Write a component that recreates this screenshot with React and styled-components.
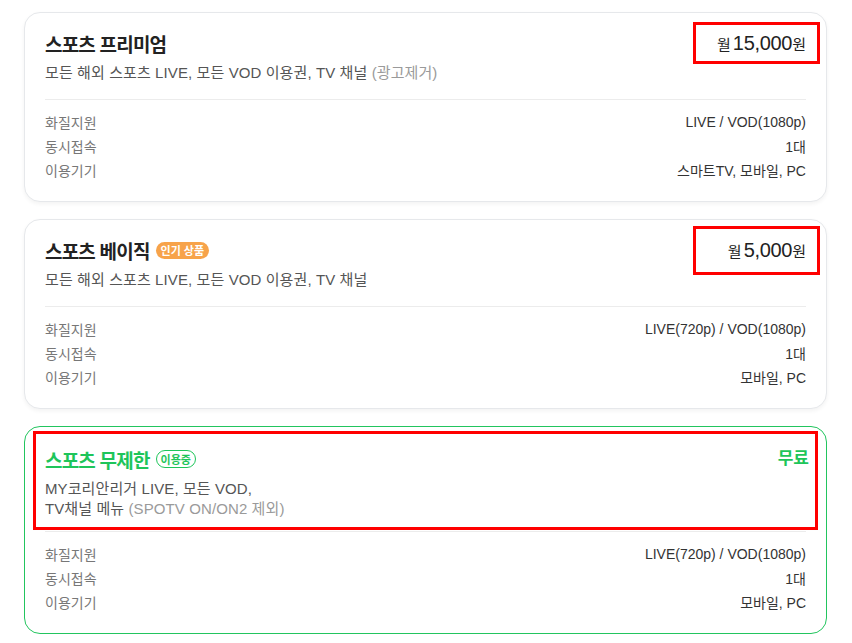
import React from 'react'
import styled, { createGlobalStyle, css } from 'styled-components'

const GlobalStyle = createGlobalStyle`
	body {
		margin: 0;
		background: #fff;
		font-family: 'Liberation Sans', 'Noto Sans CJK KR', sans-serif;
	}
`

const Page = styled.div`
	padding: 12px 25px 8px 24px;
	display: flex;
	flex-direction: column;
	gap: 17px;
`

const Card = styled.div`
	border: 1px solid ${(p) => (p.$active ? '#22c55e' : '#e6e8eb')};
	border-radius: 16px;
	padding: ${(p) => (p.$active ? '4px' : '17px')} 20px 19px 20px;
	box-shadow: ${(p) => (p.$active ? 'none' : '0 2px 4px rgba(0, 0, 0, 0.05)')};
	background: #fff;
`

const Header = styled.div`
	display: flex;
	justify-content: space-between;
	align-items: flex-start;
	${(p) =>
		p.$marked &&
		css`
			border: 3px solid #ff0000;
			margin: 0 -12px 0 -12px;
			padding: 12px 6px 8px 9px;
		`}
`

const Info = styled.div`
	display: flex;
	flex-direction: column;
	gap: 7px;
`

const TitleRow = styled.div`
	display: flex;
	align-items: center;
	gap: 6px;
	height: 26px;
`

const Title = styled.h2`
	margin: 0;
	font-size: 19px;
	font-weight: 700;
	letter-spacing: -0.8px;
	color: ${(p) => (p.$active ? '#1ec55a' : '#222')};
`

const HotBadge = styled.span`
	display: inline-flex;
	align-items: center;
	height: 17px;
	padding: 0 5px;
	border-radius: 9px;
	background: #f7a34a;
	color: #fff;
	font-size: 11px;
	font-weight: 700;
`

const UsingBadge = styled.span`
	display: inline-flex;
	align-items: center;
	height: 16px;
	padding: 0 4px;
	border: 1px solid #1ec55a;
	border-radius: 9px;
	color: #1ec55a;
	font-size: 11px;
	font-weight: 700;
`

const Desc = styled.p`
	margin: 0;
	font-size: 15px;
	line-height: 20px;
	color: #555;
	letter-spacing: 0.1px;

	span {
		color: #9a9a9a;
	}
`

const Price = styled.div`
	display: flex;
	align-items: center;
	justify-content: flex-end;
	width: 127px;
	height: ${(p) => p.$h}px;
	margin: ${(p) => p.$top}px -14px 0 0;
	padding-right: 11px;
	box-sizing: border-box;
	border: 3px solid #ff0000;
	color: #222;
	font-size: 15px;

	strong {
		font-size: 20px;
		font-weight: 400;
		margin-left: 2px;
		letter-spacing: -0.3px;
	}
`

const Free = styled.div`
	color: #1ec55a;
	font-size: 17px;
	font-weight: 700;
	line-height: 26px;
`

const Divider = styled.hr`
	border: none;
	border-top: 1px solid #ececec;
	margin: ${(p) => (p.$tight ? '1px' : '16px')} 0 10px;
`

const Specs = styled.dl`
	margin: 0;
	display: grid;
	grid-template-columns: 1fr auto;
	grid-auto-rows: 24px;
	align-items: center;
	font-size: 14px;

	dt {
		color: #777;
	}

	dd {
		margin: 0;
		color: #333;
		text-align: right;
	}
`

const plans = [
	{
		title: '스포츠 프리미엄',
		desc: (
			<>
				모든 해외 스포츠 LIVE, 모든 VOD 이용권, TV 채널 <span>(광고제거)</span>
			</>
		),
		price: '15,000',
		box: { h: 42, top: -8 },
		quality: 'LIVE / VOD(1080p)',
		devices: '스마트TV, 모바일, PC',
	},
	{
		title: '스포츠 베이직',
		hot: true,
		desc: <>모든 해외 스포츠 LIVE, 모든 VOD 이용권, TV 채널</>,
		price: '5,000',
		box: { h: 49, top: -11 },
		quality: 'LIVE(720p) / VOD(1080p)',
		devices: '모바일, PC',
	},
	{
		title: '스포츠 무제한',
		active: true,
		desc: (
			<>
				MY코리안리거 LIVE, 모든 VOD,
				<br />
				TV채널 메뉴 <span>(SPOTV ON/ON2 제외)</span>
			</>
		),
		quality: 'LIVE(720p) / VOD(1080p)',
		devices: '모바일, PC',
	},
]

const PlanCard = ({ plan }) => (
	<Card $active={plan.active}>
		<Header $marked={plan.active}>
			<Info>
				<TitleRow>
					<Title $active={plan.active}>{plan.title}</Title>
					{plan.hot && <HotBadge>인기 상품</HotBadge>}
					{plan.active && <UsingBadge>이용중</UsingBadge>}
				</TitleRow>
				<Desc>{plan.desc}</Desc>
			</Info>
			{plan.active ? (
				<Free>무료</Free>
			) : (
				<Price $h={plan.box.h} $top={plan.box.top}>
					월<strong>{plan.price}</strong>원
				</Price>
			)}
		</Header>
		<Divider $tight={plan.active} />
		<Specs>
			<dt>화질지원</dt>
			<dd>{plan.quality}</dd>
			<dt>동시접속</dt>
			<dd>1대</dd>
			<dt>이용기기</dt>
			<dd>{plan.devices}</dd>
		</Specs>
	</Card>
)

const App = () => (
	<>
		<GlobalStyle />
		<Page>
			{plans.map((plan) => (
				<PlanCard key={plan.title} plan={plan} />
			))}
		</Page>
	</>
)

export default App
